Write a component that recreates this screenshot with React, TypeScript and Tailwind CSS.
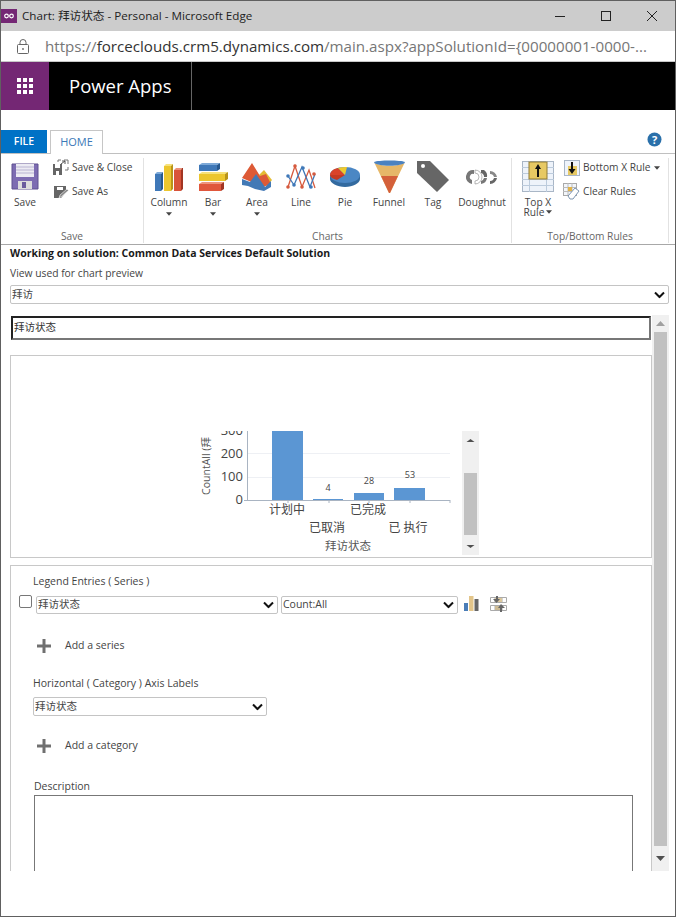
import React from 'react';

const ui = { fontFamily: '"Open Sans", "Noto Sans CJK SC", sans-serif' };

const Caret = () => (
  <svg width="6" height="4" viewBox="0 0 7 4" className="shrink-0">
    <path d="M0 0h7L3.500 4z" fill="#444" />
  </svg>
);

const Chevron = () => (
  <svg width="11" height="7" viewBox="0 0 11 7" className="absolute right-[4px] top-1/2 -translate-y-1/2 pointer-events-none">
    <path d="M1 1l4.500 4.500L10 1" fill="none" stroke="#111" strokeWidth="2" />
  </svg>
);

const SaveIcon = () => (
  <svg width="30" height="30" viewBox="0 0 30 30">
    <path d="M2 2h26v25H2z" fill="#7d6cb2" stroke="#5f5190" />
    <rect x="6" y="2" width="18" height="13" fill="#ecebf3" />
    <path d="M6 5h18M6 8h18M6 11h18" stroke="#b9b4d2" />
    <rect x="8" y="19" width="14" height="8" fill="#ddd" />
    <rect x="12" y="20" width="4" height="6" fill="#6a5b9e" />
  </svg>
);

const SaveCloseIcon = () => (
  <svg width="17" height="17" viewBox="0 0 17 17">
    <path d="M1 5h9v11H1z" fill="#666" />
    <rect x="3" y="5" width="5" height="4" fill="#fff" />
    <rect x="4" y="12" width="3" height="4" fill="#fff" />
    <path d="M6 3V1h3M12 1h4v4M16 8v3h-3" fill="none" stroke="#777" />
    <path d="M9 5l4-3M13 2v3M13 2h-3" fill="none" stroke="#555" />
  </svg>
);

const SaveAsIcon = () => (
  <svg width="17" height="17" viewBox="0 0 17 17">
    <path d="M2 3h12v6l-5 6H2z" fill="#666" />
    <rect x="5" y="4" width="6" height="3" fill="#fff" />
    <path d="M7 15l1-3 7-6 1.500 1.500-7 6z" fill="#888" stroke="#fff" strokeWidth="0.6" />
  </svg>
);

const ColumnIcon = () => (
  <svg width="30" height="30" viewBox="0 0 30 30">
    <path d="M1 12h6v17H1z" fill="#3f78b8" />
    <path d="M1 12l2-2h6l-2 2z" fill="#7da9d8" />
    <path d="M7 12l2-2v17l-2 2z" fill="#28598f" />
    <path d="M10 4h7v25h-7z" fill="#ecc62e" />
    <path d="M10 4l2-2h7l-2 2z" fill="#f6e27c" />
    <path d="M17 4l2-2v25l-2 2z" fill="#b8941a" />
    <path d="M20 8h7v21h-7z" fill="#d9533a" />
    <path d="M20 8l2-2h6l-1 2z" fill="#ec9078" />
    <path d="M27 8l1-2h1v21l-2 2z" fill="#a23522" />
  </svg>
);

const BarIcon = () => (
  <svg width="30" height="30" viewBox="0 0 30 30">
    <path d="M1 3h18v6H1z" fill="#3f78b8" />
    <path d="M1 3l3-2h18l-3 2z" fill="#7da9d8" />
    <path d="M19 3l3-2v6l-3 2z" fill="#28598f" />
    <path d="M1 12h26v7H1z" fill="#ecc62e" />
    <path d="M1 12l3-2h26l-3 2z" fill="#f6e27c" />
    <path d="M27 12l3-2v7l-3 2z" fill="#b8941a" />
    <path d="M1 22h22v7H1z" fill="#e0573c" />
    <path d="M1 22l3-2h22l-3 2z" fill="#ee947c" />
    <path d="M23 22l3-2v7l-3 2z" fill="#a23522" />
  </svg>
);

const AreaIcon = () => (
  <svg width="32" height="30" viewBox="0 0 32 30">
    <path d="M18 13l5-5 8 10-5 6z" fill="#e4bc32" />
    <path d="M1 16L11 1l8 13 6-2 5 10-8 3z" fill="#dd5a36" />
    <path d="M1 17l8 3 6-8 9 13 6-6v6l-7 4-9-2-7-3-6-1z" fill="#4279b6" />
  </svg>
);

const LineIcon = () => (
  <svg width="30" height="26" viewBox="0 0 30 26">
    <path d="M2 23L9 2l7 21 7-17 6 18" fill="none" stroke="#d65a3e" strokeWidth="1.300" />
    <path d="M2 12l6 9 8-18 8 20 5-13" fill="none" stroke="#3f78b8" strokeWidth="1.300" />
    <g fill="#d65a3e">
      <circle cx="2" cy="23" r="1.800" /><circle cx="9" cy="2" r="1.800" /><circle cx="16" cy="23" r="1.800" /><circle cx="28" cy="10" r="1.800" />
    </g>
    <g fill="#3f78b8">
      <circle cx="17" cy="4" r="1.800" /><circle cx="8" cy="21" r="1.800" /><circle cx="25" cy="23" r="1.800" /><circle cx="2" cy="12" r="1.800" />
    </g>
  </svg>
);

const PieIcon = () => (
  <svg width="32" height="22" viewBox="0 0 32 22">
    <path d="M1 9v4c0 4 7 8 15 8s15-4 15-8V9z" fill="#336a9f" />
    <ellipse cx="16" cy="9" rx="15" ry="8" fill="#4b87c4" />
    <path d="M16 9L1 9c0-3 3-6 8-7z" fill="#d9432a" />
    <path d="M16 9l-8 5C4 13 1 11 1 9z" fill="#c53a22" />
    <path d="M16 9L9 2c3-1 6-1 9-1z" fill="#eec92e" />
  </svg>
);

const FunnelIcon = () => (
  <svg width="33" height="33" viewBox="0 0 33 33">
    <path d="M1 2c4 5 27 5 31 0L17 33h-1z" fill="#e6b768" />
    <path d="M8 16h17l-8 17h-1z" fill="#d4603a" />
    <path d="M1 2c4-2 27-2 31 0-1 5-30 5-31 0z" fill="#4b82c0" />
  </svg>
);

const TagIcon = () => (
  <svg width="33" height="33" viewBox="0 0 33 33">
    <path d="M0 1h13l19 19-12 12L0 13z" fill="#666" />
    <circle cx="6" cy="6" r="2" fill="#fff" />
  </svg>
);

const DoughnutIcon = () => (
  <svg width="32" height="16" viewBox="0 0 32 16">
    <path d="M8 1a7 7 0 0 0-2 14l0-4a3 3 0 0 1 2-6z" fill="#777" />
    <path d="M9 1a7 7 0 0 1 0 14v-3a4 4 0 0 0 0-8z" fill="#fff" stroke="#888" strokeWidth="0.6" />
    <path d="M15 1l3 0a7 7 0 0 1 3 7h-3a4 4 0 0 0-3-4z" fill="#666" />
    <path d="M21 9a7 7 0 0 1-6 6l0-3a4 4 0 0 0 3-3z" fill="#777" />
    <path d="M24 2a7 7 0 0 1 7 6h-3a4 4 0 0 0-4-3z" fill="#888" />
    <path d="M31 9a7 7 0 0 1-7 6v-3a4 4 0 0 0 4-3z" fill="#666" />
  </svg>
);

const TopRuleIcon = () => (
  <svg width="32" height="31" viewBox="0 0 32 31">
    <rect x="0.500" y="0.500" width="31" height="30" fill="#eef3fa" stroke="#a9b6c6" />
    <path d="M0 6.500h32M0 12.500h32M0 18.500h32M0 24.500h32M7.500 0v31M24.500 0v31" stroke="#bccbdc" />
    <rect x="7" y="1" width="18" height="17" fill="#e7c963" stroke="#8f7a35" />
    <path d="M16 3l3 5h-2v8h-2V8h-2z" fill="#111" />
  </svg>
);

const BottomRuleIcon = () => (
  <svg width="16" height="16" viewBox="0 0 16 16">
    <rect x="0.500" y="0.500" width="15" height="15" fill="#eef3fa" stroke="#a9b6c6" />
    <rect x="4" y="6" width="9" height="9" fill="#e7c963" />
    <path d="M7 2h2v7h2.500L8 14 4.500 9H7z" fill="#111" />
  </svg>
);

const ClearRulesIcon = () => (
  <svg width="17" height="17" viewBox="0 0 17 17">
    <rect x="0.500" y="0.500" width="13" height="12" fill="#f3f6fa" stroke="#a9a9a9" />
    <path d="M0 4.500h13M0 8.500h13M5 0v12M9 0v12" stroke="#bbb" />
    <rect x="5" y="4" width="4" height="4" fill="#e0b34a" />
    <path d="M5 13l7-8 4 3-6 8H7z" fill="#fff" stroke="#7d95b0" />
  </svg>
);

const SeriesBarsIcon = () => (
  <svg width="15" height="15" viewBox="0 0 15 15">
    <rect x="0" y="7" width="4" height="8" fill="#4a7db8" />
    <rect x="5" y="0" width="4.500" height="15" fill="#e3c58a" />
    <rect x="10.500" y="3" width="4" height="12" fill="#666" />
  </svg>
);

const SeriesSwapIcon = () => (
  <svg width="17" height="16" viewBox="0 0 17 16">
    <path d="M0.500 1.500h16v5H0.500zM0.500 9.500h16v5H0.500zM5 1v5M12 1v5M5 9v5M12 9v5" fill="none" stroke="#aaa" />
    <rect x="5" y="2" width="7" height="4" fill="#dcc89c" />
    <rect x="5" y="10" width="7" height="4" fill="#cdbb94" />
    <path d="M3 3h3V0h2v3h2L6.500 7z" fill="#666" />
    <path d="M8 12h2v4h2v-4h3l-4-4z" fill="#666" />
  </svg>
);

const PlusIcon = () => (
  <svg width="14" height="14" viewBox="0 0 14 14" className="shrink-0">
    <path d="M5.500 0h3v5.500H14v3H8.500V14h-3V8.500H0v-3h5.500z" fill="#707070" />
  </svg>
);

const LargeButton = ({
  icon,
  label,
  width,
  caret,
}: {
  icon: React.ReactNode;
  label: string;
  width: string;
  caret?: boolean;
}) => (
  <div className={`flex flex-col items-center ${width}`}>
    <div className="h-[33px] flex items-center justify-center">{icon}</div>
    <div className="mt-[2px] text-[10.200px] leading-[14px] text-[#444]">{label}</div>
    {caret && (
      <div className="mt-[3px]">
        <Caret />
      </div>
    )}
  </div>
);

const SmallButton = ({ icon, label, caret }: { icon: React.ReactNode; label: string; caret?: boolean }) => (
  <div className="flex items-center h-[17px] gap-[3px] whitespace-nowrap">
    <div className="w-[17px] flex justify-center">{icon}</div>
    <span className="text-[10.200px] text-[#444]">{label}</span>
    {caret && <Caret />}
  </div>
);

const RibbonGroup = ({
  title,
  width,
  children,
}: {
  title: string;
  width: string;
  children: React.ReactNode;
}) => (
  <div className={`${width} shrink-0 flex flex-col border-r border-[#e2e2e2] mt-[4px] mb-[1px]`}>
    <div className="flex-1 flex">{children}</div>
    <div className="h-[14px] text-center text-[10.200px] leading-[14px] text-[#666]">{title}</div>
  </div>
);

const Select = ({ value, className }: { value: string; className: string }) => (
  <div className={`relative ${className}`}>
    <select
      defaultValue={value}
      style={ui}
      className="block appearance-none w-full h-full bg-white border border-[#c4c4c4] rounded-[2px] pl-[1px] text-[10.500px] text-[#444] outline-none"
    >
      <option>{value}</option>
    </select>
    <Chevron />
  </div>
);

const ScrollBar = () => (
  <div className="w-[17px] shrink-0 bg-[#f0f0f0] flex flex-col items-center">
    <div className="h-[17px] flex items-center justify-center">
      <svg width="9" height="5" viewBox="0 0 9 5">
        <path d="M4.500 0L9 5H0z" fill="#a0a0a0" />
      </svg>
    </div>
    <div className="flex-1 w-[13px] bg-[#c1c1c1]" />
    <div className="h-[25px] flex items-center justify-center">
      <svg width="9" height="5" viewBox="0 0 9 5">
        <path d="M0 0h9L4.500 5z" fill="#505050" />
      </svg>
    </div>
  </div>
);

const ChartPreview = () => (
  <svg width="290" height="131" viewBox="190 425 290 131" className="block ml-[179px] mt-[69px]">
    <text x="210" y="466" transform="rotate(-90 210 466)" textAnchor="middle" fontSize="10.500" fill="#555" style={ui}>
      CountAll (拜
    </text>
    <path d="M247 453.500h203M247 477.500h203" stroke="#eef0f4" />
    <text x="243" y="435" textAnchor="end" fontSize="13" fill="#444" style={ui}>300</text>
    <rect x="190" y="425" width="58" height="6" fill="#fff" />
    <text x="243" y="458" textAnchor="end" fontSize="13" fill="#444" style={ui}>200</text>
    <text x="243" y="481" textAnchor="end" fontSize="13" fill="#444" style={ui}>100</text>
    <text x="243" y="504" textAnchor="end" fontSize="13" fill="#444" style={ui}>0</text>
    <rect x="272" y="431" width="31" height="69" fill="#5b96d3" />
    <rect x="313" y="499" width="30" height="1" fill="#5b96d3" />
    <rect x="354" y="493" width="30" height="7" fill="#5b96d3" />
    <rect x="394" y="488" width="31" height="12" fill="#5b96d3" />
    <path d="M247.500 431v69.500M244 500.500h206M288 500v3M329 500v3M369 500v3M410 500v3M450 500v3" stroke="#a9b4c2" fill="none" />
    <g fontSize="9" fill="#444" textAnchor="middle" style={ui}>
      <text x="328" y="491">4</text>
      <text x="369" y="484">28</text>
      <text x="410" y="478">53</text>
    </g>
    <g fontSize="12" fill="#444" textAnchor="middle" style={ui}>
      <text x="287" y="514">计划中</text>
      <text x="327" y="532">已取消</text>
      <text x="368" y="514">已完成</text>
      <text x="408" y="532">已 执行</text>
    </g>
    <text x="348" y="550" fontSize="11.500" fill="#555" textAnchor="middle" style={ui}>拜访状态</text>
    <rect x="462" y="431" width="17" height="124" fill="#f0f0f0" />
    <rect x="464" y="473" width="13" height="62" fill="#c1c1c1" />
    <path d="M470.500 439l4 3h-8z" fill="#505050" />
    <path d="M466.500 545h8l-4 3z" fill="#505050" />
  </svg>
);

export default function App() {
  return (
    <div style={ui} className="w-[676px] h-[917px] bg-white border border-[#606060] flex flex-col overflow-hidden text-[#333]">
      {/* window title */}
      <div className="h-[30px] shrink-0 bg-[#cccccc] flex items-center">
        <div className="w-[16px] h-[14px] bg-[#742774] flex items-center justify-center">
          <svg width="10" height="6" viewBox="0 0 10 6">
            <circle cx="2.500" cy="3" r="1.800" fill="none" stroke="#fff" strokeWidth="1.200" />
            <circle cx="7.500" cy="3" r="1.800" fill="none" stroke="#fff" strokeWidth="1.200" />
          </svg>
        </div>
        <div className="ml-[5px] text-[11.650px] text-[#222] whitespace-nowrap">Chart: 拜访状态 - Personal - Microsoft Edge</div>
        <div className="ml-auto flex items-center gap-[36px] pr-[18px]">
          <svg width="10" height="10" viewBox="0 0 10 10"><path d="M0 5.500h10" stroke="#222" /></svg>
          <svg width="10" height="10" viewBox="0 0 10 10"><rect x="0.500" y="0.500" width="9" height="9" fill="none" stroke="#222" /></svg>
          <svg width="10" height="10" viewBox="0 0 10 10"><path d="M0 0l10 10M10 0L0 10" stroke="#222" /></svg>
        </div>
      </div>

      {/* address bar */}
      <div className="h-[31px] shrink-0 bg-white border-b border-[#c8c8c8] flex items-center">
        <svg width="12" height="15" viewBox="0 0 12 15" className="ml-[16px]">
          <path d="M3 6V3.500a3 3 0 0 1 6 0V6" fill="none" stroke="#666" />
          <rect x="0.500" y="5.500" width="11" height="9" rx="1" fill="none" stroke="#666" />
          <circle cx="6" cy="10" r="0.900" fill="#666" />
        </svg>
        <div className="ml-[16px] text-[15.150px] whitespace-nowrap text-[#767676]">
          https://<span className="text-[#333]">forceclouds.crm5.dynamics.com</span>/main.aspx?appSolutionId={'{'}00000001-0000-...
        </div>
      </div>

      {/* app header */}
      <div className="h-[48px] shrink-0 bg-black flex items-stretch">
        <div className="w-[48px] bg-[#742774] flex items-center justify-center">
          <div className="grid grid-cols-3 gap-[2px]">
            {Array.from({ length: 9 }).map((_, i) => (
              <div key={i} className="w-[4px] h-[4px] bg-white" />
            ))}
          </div>
        </div>
        <div className="w-[143px] border-r border-[#666] pl-[20px] flex items-center text-white text-[18.500px]">Power Apps</div>
      </div>

      <div className="h-[20px] shrink-0" />

      {/* tabs */}
      <div className="h-[24px] shrink-0 flex items-stretch border-b border-[#c0c0c0] relative">
        <div className="w-[46px] bg-[#0072c6] text-white text-[10.500px] font-semibold flex items-center justify-center">FILE</div>
        <div className="ml-[3px] w-[53px] h-[24px] bg-white border border-b-0 border-[#c6c6c6] text-[#3b79b7] text-[11px] flex items-center justify-center">HOME</div>
        <svg width="15" height="15" viewBox="0 0 15 15" className="absolute right-[13px] top-[2px]">
          <circle cx="7.500" cy="7.500" r="7" fill="#2a70aa" />
          <text x="7.500" y="11.500" textAnchor="middle" fontSize="11" fontWeight="700" fill="#fff" style={ui}>?</text>
        </svg>
      </div>

      {/* ribbon */}
      <div className="h-[91px] shrink-0 flex border-b border-[#a8a8a8]">
        <RibbonGroup title="Save" width="w-[143px]">
          <div className="flex pt-[2px]">
            <div className="ml-[9px]">
              <div className="flex flex-col items-center w-[30px]">
                <div className="h-[33px] flex items-center"><SaveIcon /></div>
                <div className="mt-[2px] text-[10.200px] leading-[14px] text-[#444]">Save</div>
              </div>
            </div>
            <div className="ml-[12px] -mt-[1px] flex flex-col gap-[7px]">
              <SmallButton icon={<SaveCloseIcon />} label="Save & Close" />
              <SmallButton icon={<SaveAsIcon />} label="Save As" />
            </div>
          </div>
        </RibbonGroup>
        <RibbonGroup title="Charts" width="w-[368px]">
          <div className="flex pt-[2px] pl-[3px]">
            <LargeButton icon={<ColumnIcon />} label="Column" width="w-[44px]" caret />
            <LargeButton icon={<BarIcon />} label="Bar" width="w-[44px]" caret />
            <LargeButton icon={<AreaIcon />} label="Area" width="w-[44px]" caret />
            <LargeButton icon={<LineIcon />} label="Line" width="w-[44px]" />
            <LargeButton icon={<PieIcon />} label="Pie" width="w-[44px]" />
            <LargeButton icon={<FunnelIcon />} label="Funnel" width="w-[44px]" />
            <LargeButton icon={<TagIcon />} label="Tag" width="w-[44px]" />
            <LargeButton icon={<DoughnutIcon />} label="Doughnut" width="w-[54px]" />
          </div>
        </RibbonGroup>
        <RibbonGroup title="Top/Bottom Rules" width="w-[157px]">
          <div className="flex pt-[2px] pl-[9px]">
            <div className="flex flex-col items-center w-[34px]">
              <div className="h-[33px] flex items-center"><TopRuleIcon /></div>
              <div className="mt-[4px] text-[10.200px] leading-[10px] text-[#444] text-center">Top X</div>
              <div className="flex items-center gap-[2px] text-[10.200px] leading-[10px] text-[#444]">Rule <Caret /></div>
            </div>
            <div className="ml-[8px] -mt-[1px] flex flex-col gap-[7px]">
              <SmallButton icon={<BottomRuleIcon />} label="Bottom X Rule" caret />
              <SmallButton icon={<ClearRulesIcon />} label="Clear Rules" />
            </div>
          </div>
        </RibbonGroup>
      </div>

      {/* form header */}
      <div className="shrink-0 pl-[9px] pr-[6px]">
        <div className="h-[18px] flex items-center text-[10.500px] font-bold text-[#1a1a1a]">Working on solution: Common Data Services Default Solution</div>
        <div className="h-[22px] flex items-center text-[10.300px] text-[#444]">View used for chart preview</div>
        <Select value="拜访" className="h-[19px]" />
      </div>

      {/* scrolling form */}
      <div className="h-[556px] mt-[11px] shrink-0 flex overflow-hidden">
        <div className="w-[651px] shrink-0 overflow-hidden">
          <div className="ml-[10px] mr-[1px] mt-[1px] h-[24px] border-2 border-t-[#222] border-l-[#222] border-r-[#777] border-b-[#777] flex items-center pl-[1px] text-[10.500px] text-[#333]">
            拜访状态
          </div>
          <div className="ml-[9px] mt-[15px] h-[203px] border border-[#c8c8c8]">
            <ChartPreview />
          </div>
          <div className="ml-[9px] mt-[7px] h-[320px] border border-[#c8c8c8]">
            <div className="pl-[22px] pt-[8px] h-[23px] text-[10.500px] leading-[14px] text-[#444]">Legend Entries ( Series )</div>
            <div className="flex items-start h-[25px] pl-[8px] pt-[7px]">
              <div className="w-[13px] h-[13px] border border-[#777] rounded-[2px] -mt-[1px] shrink-0" />
              <Select value="拜访状态" className="ml-[4px] w-[242px] h-[18px]" />
              <Select value="Count:All" className="ml-[3px] w-[177px] h-[18px]" />
              <div className="ml-[6px]"><SeriesBarsIcon /></div>
              <div className="ml-[11px]"><SeriesSwapIcon /></div>
            </div>
            <div className="flex items-center h-[18px] mt-[23px] pl-[26px]">
              <PlusIcon />
              <span className="ml-[14px] text-[10.500px] text-[#444]">Add a series</span>
            </div>
            <div className="mt-[20px] pl-[22px] h-[18px] flex items-center text-[10.500px] text-[#444]">Horizontal ( Category ) Axis Labels</div>
            <Select value="拜访状态" className="mt-[4px] ml-[22px] w-[234px] h-[19px]" />
            <div className="flex items-center h-[18px] mt-[21px] pl-[26px]">
              <PlusIcon />
              <span className="ml-[14px] text-[10.500px] text-[#444]">Add a category</span>
            </div>
            <div className="mt-[25px] pl-[23px] h-[14px] flex items-center text-[10.500px] text-[#444]">Description</div>
            <div className="ml-[23px] mt-[1px] w-[599px] h-[110px] border border-[#777]" />
          </div>
        </div>
        <ScrollBar />
      </div>
      <div className="flex-1 bg-white" />
    </div>
  );
}
